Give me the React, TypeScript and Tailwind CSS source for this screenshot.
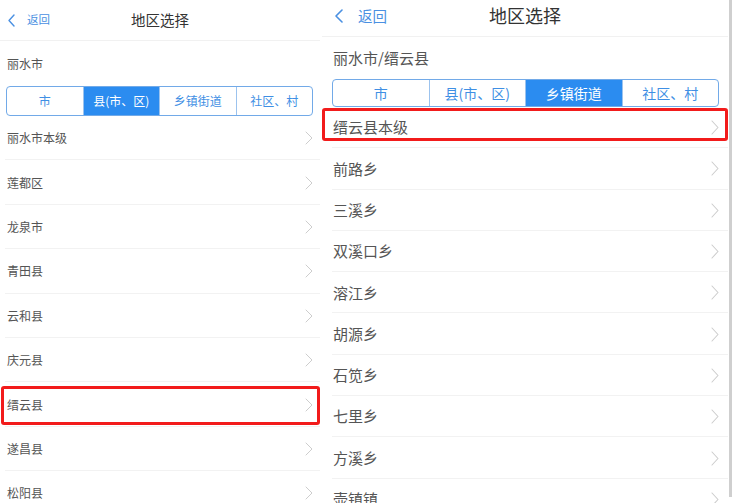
import React from "react";

const FONT = { fontFamily: '"Noto Sans CJK SC", "Noto Sans", sans-serif' };

function Chevron({ w, h, color, sw }: { w: number; h: number; color: string; sw: number }) {
  return (
    <svg width={w} height={h} viewBox={`0 0 ${w} ${h}`} fill="none">
      <path d={`M1 1 L${w - 1} ${h / 2} L1 ${h - 1}`} stroke={color} strokeWidth={sw} strokeLinecap="round" strokeLinejoin="round" />
    </svg>
  );
}

function BackChevron({ w, h, sw }: { w: number; h: number; sw: number }) {
  return (
    <svg width={w} height={h} viewBox={`0 0 ${w} ${h}`} fill="none">
      <path d={`M${w - 1} 1 L1 ${h / 2} L${w - 1} ${h - 1}`} stroke="#4a90e2" strokeWidth={sw} strokeLinecap="round" strokeLinejoin="round" />
    </svg>
  );
}

const tabs = ["市", "县(市、区)", "乡镇街道", "社区、村"];

function LeftPanel() {
  const items = ["丽水市本级", "莲都区", "龙泉市", "青田县", "云和县", "庆元县", "缙云县", "遂昌县", "松阳县"];
  return (
    <div className="w-[320px] shrink-0 h-full flex flex-col bg-white">
      <div className="h-[41px] shrink-0 grid grid-cols-[1fr_auto_1fr] items-center border-b border-[#f1f1f1]">
        <div className="flex items-center pl-[8px] gap-[12px] text-[11.5px] text-[#4a90e2]">
          <BackChevron w={7} h={13} sw={1.4} />
          <span>返回</span>
        </div>
        <div className="text-[14.5px] text-[#333]">地区选择</div>
        <div />
      </div>
      <div className="h-[45px] shrink-0 flex items-center pl-[7px] text-[12px] text-[#555]">丽水市</div>
      <div className="h-[30px] shrink-0 ml-[6px] mr-[7px] flex border border-[#72aae8] rounded-[4px] overflow-hidden text-[12px]">
        {tabs.map((t, i) => (
          <div
            key={t}
            className={
              "flex-1 flex items-center justify-center " +
              (i > 0 ? "border-l border-[#9cc3ee] " : "") +
              (i === 1 ? "bg-[#2b8cf0] text-white" : "text-[#3f8fe4]")
            }
          >
            {t}
          </div>
        ))}
      </div>
      <div className="flex flex-col">
        {items.map((t, i) => (
          <div key={t} className="relative h-[44.4px] shrink-0 flex items-center pl-[7px] pr-[7px] text-[12px] text-[#555]">
            <span className="flex-1">{t}</span>
            <Chevron w={8} h={14} color="#cdcdcd" sw={1} />
            <div className="absolute left-[5px] right-0 bottom-0 h-px bg-[#f2f2f2]" />
            {i === 6 && (
              <div className="absolute left-[1px] right-0 top-[4px] bottom-[2px] border-[3px] border-[#f21b1b] rounded-[3px]" />
            )}
          </div>
        ))}
      </div>
    </div>
  );
}

function RightPanel() {
  const items = ["缙云县本级", "前路乡", "三溪乡", "双溪口乡", "溶江乡", "胡源乡", "石笕乡", "七里乡", "方溪乡", "壶镇镇"];
  return (
    <div className="w-[406px] shrink-0 h-full flex flex-col bg-white">
      <div className="h-[37px] shrink-0 grid grid-cols-[1fr_auto_1fr] items-center pb-[5px] border-b border-[#f1f1f1]">
        <div className="flex items-center pl-[13px] gap-[15px] text-[14.5px] text-[#4a90e2]">
          <BackChevron w={8} h={14} sw={1.6} />
          <span>返回</span>
        </div>
        <div className="text-[18px] text-[#333]">地区选择</div>
        <div />
      </div>
      <div className="h-[42px] shrink-0 flex items-center pl-[11px] text-[15px] text-[#555]">丽水市/缙云县</div>
      <div className="h-[28px] shrink-0 ml-[10px] mr-[9px] flex border border-[#72aae8] rounded-[4px] overflow-hidden text-[14px]">
        {tabs.map((t, i) => (
          <div
            key={t}
            className={
              "flex-1 flex items-center justify-center " +
              (i > 0 ? "border-l border-[#9cc3ee] " : "") +
              (i === 2 ? "bg-[#2b8cf0] text-white" : "text-[#3f8fe4]")
            }
          >
            {t}
          </div>
        ))}
      </div>
      <div className="flex flex-col">
        {items.map((t, i) => (
          <div key={t} className="relative h-[41.3px] shrink-0 flex items-center pl-[11px] pr-[9px] text-[15px] text-[#555]">
            <span className="flex-1">{t}</span>
            <Chevron w={8} h={15} color="#cdcdcd" sw={1.1} />
            <div className="absolute left-[10px] right-0 bottom-0 h-px bg-[#f2f2f2]" />
            {i === 0 && (
              <div className="absolute left-0 right-0 top-[1px] bottom-[7px] border-[3px] border-[#f21b1b] rounded-[3px]" />
            )}
          </div>
        ))}
      </div>
    </div>
  );
}

export default function App() {
  return (
    <div className="w-[733px] h-[503px] overflow-hidden bg-white flex" style={FONT}>
      <LeftPanel />
      <div className="w-[2px] shrink-0" />
      <RightPanel />
      <div className="w-[1px] shrink-0" />
      <div className="w-[3px] shrink-0 h-[497px] bg-[#cfcfcf]" />
    </div>
  );
}
